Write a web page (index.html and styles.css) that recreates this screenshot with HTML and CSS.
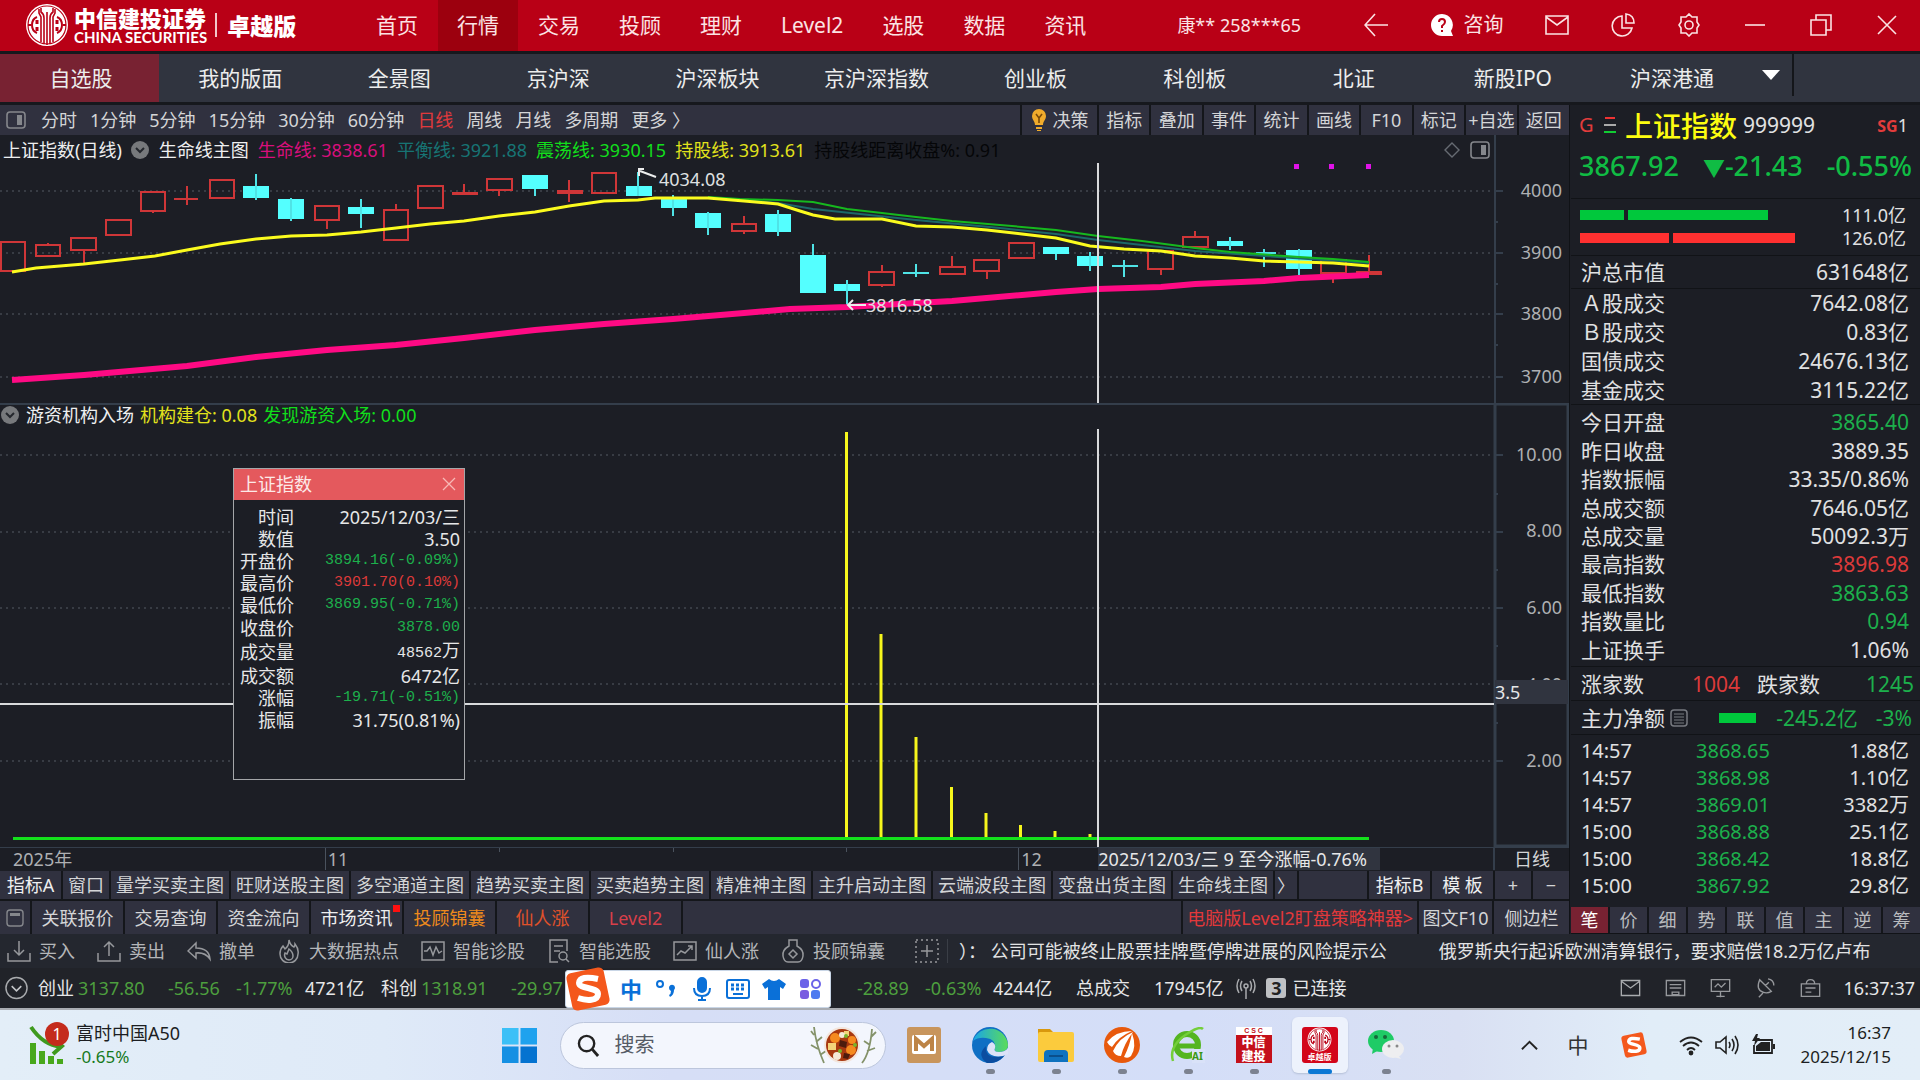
FILE: index.html
```html
<!DOCTYPE html>
<html lang="zh-CN">
<head>
<meta charset="utf-8">
<title>中信建投证券 卓越版</title>
<link rel="stylesheet" href="styles.css">
</head>
<body>
<svg class="defs" aria-hidden="true">
  <symbol id="emblem" viewBox="0 0 44 44">
    <circle cx="22" cy="22" r="21" fill="#fff"/>
    <circle cx="22" cy="22" r="19" fill="none" stroke="#b90016" stroke-width="1.2"/>
    <g fill="none" stroke="#b90016" stroke-width="1.6">
      <path d="M16 5v4q3 2 3 6v26M28 5v4q-3 2-3 6v26M14 6v4l2 4v25M30 6v4l-2 4v25M22 9v33"/>
      <path d="M3 22h3M41 22h-3M12 14q-5 2-5 8t5 8M32 14q5 2 5 8t-5 8" stroke-width="2"/>
      <path d="M12 17v4M12 24v4M32 17v4M32 24v4" stroke-width="3"/>
    </g>
  </symbol>
  <symbol id="mail" viewBox="0 0 24 24"><path d="M1 3h22v18H1zM1 4l11 8 11-8" fill="none" stroke="currentColor" stroke-width="1.6"/></symbol>
  <symbol id="panel" viewBox="0 0 20 18"><rect x="1" y="1" width="18" height="16" rx="3" fill="none" stroke="currentColor" stroke-width="1.6"/><path d="M11 4h5v10h-5z" fill="currentColor"/></symbol>
  <symbol id="chev" viewBox="0 0 20 20"><circle cx="10" cy="10" r="9" fill="#77797c"/><path d="M6 8l4 4 4-4" fill="none" stroke="#24272d" stroke-width="2"/></symbol>
  <symbol id="sogou" viewBox="0 0 48 48"><rect x="5" y="5" width="38" height="38" rx="5" fill="#f4581c" transform="rotate(-12 24 24)"/><path d="M34 14q-18-4-19 4c0 6 19 4 19 11 0 7-11 7-20 4" fill="none" stroke="#fff" stroke-width="6"/></symbol>
</svg>

<header class="topbar">
  <div class="brand">
    <svg class="brand-mark"><use href="#emblem"/></svg>
    <div class="brand-name"><strong>中信建投证券</strong><span>CHINA SECURITIES</span></div>
    <strong class="brand-edition">卓越版</strong>
  </div>
  <nav class="menu">
    <a href="#">首页</a><a href="#" class="on">行情</a><a href="#">交易</a><a href="#">投顾</a><a href="#">理财</a><a href="#">Level2</a><a href="#">选股</a><a href="#">数据</a><a href="#">资讯</a>
  </nav>
  <span class="user">康** 258***65</span>
  <div class="window-tools">
    <button aria-label="返回"><svg viewBox="0 0 24 24"><path d="M24 12H1M11 1L1 12l10 11"/></svg></button>
    <button class="ask"><svg viewBox="0 0 24 24"><path d="M12 1a11 11 0 1 0 0 22h11l-2-5A11 11 0 0 0 12 1z" fill="#fff" stroke="none"/><path d="M9 9q0-3 3-3t3 3q0 2-3 4v2M12 17v2" stroke="#b90016" stroke-width="2"/></svg>咨询</button>
    <button aria-label="邮件"><svg><use href="#mail"/></svg></button>
    <button aria-label="统计"><svg viewBox="0 0 24 24"><path d="M11 3a10 10 0 1 0 10 12H11z M15 1v9h8q0-8-8-9z"/></svg></button>
    <button aria-label="设置"><svg viewBox="0 0 24 24"><path d="M9 4l3-3 3 3 5 0 0 5 2 3-2 3 0 5-5 0-3 3-3-3-5 0 0-5-2-3 2-3 0-5z"/><circle cx="12" cy="12" r="4"/></svg></button>
    <button aria-label="最小化"><svg viewBox="0 0 24 24"><path d="M2 12h20"/></svg></button>
    <button aria-label="还原"><svg viewBox="0 0 24 24"><path d="M2 7h15v15H2zM7 7V2h15v15h-5"/></svg></button>
    <button aria-label="关闭"><svg viewBox="0 0 24 24"><path d="M3 3l18 18M21 3L3 21"/></svg></button>
  </div>
</header>

<nav class="tabs">
  <div class="tabs-list">
    <a href="#" class="on">自选股</a><a href="#">我的版面</a><a href="#">全景图</a><a href="#">京沪深</a><a href="#">沪深板块</a><a href="#">京沪深指数</a><a href="#">创业板</a><a href="#">科创板</a><a href="#">北证</a><a href="#">新股IPO</a><a href="#">沪深港通</a>
  </div>
  <button class="tabs-more" aria-label="更多板块"><svg viewBox="0 0 18 10"><path d="M0 0h18l-9 10z" fill="#fff"/></svg></button>
</nav>

<main class="work">
  <section class="charts">
    <div class="toolbar">
      <div class="periods">
        <svg class="ico-panel"><use href="#panel"/></svg>
        <button>分时</button><button>1分钟</button><button>5分钟</button><button>15分钟</button><button>30分钟</button><button>60分钟</button><button class="on">日线</button><button>周线</button><button>月线</button><button>多周期</button><button>更多 〉</button>
      </div>
      <div class="tools">
        <button class="decide"><svg viewBox="0 0 16 24"><path d="M8 1a7 7 0 0 0-7 7c0 4 3 5 3 9h8c0-4 3-5 3-9a7 7 0 0 0-7-7zM5 19h6v2H5zM6 22h4v1H6z" fill="#f0ab2c"/><path d="M5 6l3 4 3-4M8 10v5" fill="none" stroke="#7a4a08" stroke-width="1.6"/></svg>决策</button><button>指标</button><button>叠加</button><button>事件</button><button>统计</button><button>画线</button><button>F10</button><button>标记</button><button>+自选</button><button>返回</button>
      </div>
    </div>

    <div class="pane pane-price">
      <svg class="plot" viewBox="0 135 1569 268" preserveAspectRatio="none">
        <path class="grid" d="M0 191h1494M0 253h1494M0 314h1494M0 377h1494"/>
        <path class="axis" d="M1495 135v268M1494 191h9M1494 253h9M1494 314h9M1494 377h9M1494 222h4M1494 284h4M1494 345h4"/>
        <path class="up" d="M1 242h24v29H1zM36 245h24v11H36zM48 243v2M71 238h25v12H71zM84 237v1M84 250v13M106 220h25v15h-25zM141 192h24v19h-24zM153 211v2M174 199h24M187 186v19M210 180h24v18h-24zM315 206h24v14h-24zM327 220v9M384 210h24v30h-24zM396 204v6M418 186h25v22h-25zM452 193h26M452 194h26M464 184v9M487 179h25v11h-25zM499 190v6M557 191h26M557 193h26M569 180v22M592 173h24v20h-24zM732 224h24v7h-24zM744 216v8M744 231v3M869 272h25v13h-25zM882 265v7M882 285v2M940 267h25v7h-25zM952 256v11M974 260h25v11h-25zM987 271v8M1009 243h25v15h-25zM1148 251h25v18h-25zM1161 269v6M1183 237h25v10h-25zM1195 231v6M1321 260h25v13h-25zM1333 273v10M1356 272h26M1356 274h26M1369 255v17"/>
        <path class="down" d="M243 186h26v12h-26zM278 199h26v20h-26zM348 207h26v7h-26zM522 175h26v14h-26zM626 186h26v10h-26zM661 199h26v9h-26zM695 213h26v15h-26zM765 214h26v18h-26zM800 255h26v38h-26zM834 284h26v7h-26zM1043 247h26v7h-26zM1077 256h26v10h-26zM1217 241h26v5h-26zM1286 250h26v19h-26z"/>
        <path class="down-wick" d="M256 174v26M291 198v23M361 199v29M535 189v7M638 172v24M673 195v21M708 212v23M778 210v26M813 244v11M847 280v25M903 273h26M916 264v13M1056 254v6M1090 252v19M1112 266h26M1124 260v17M1230 237v13M1256 253h20M1264 249v18M1299 249v26"/>
        <path class="teal" d="M708 198L744 200 778 203 813 209 860 214 916 220 1000 228 1056 234 1098 240 1195 251 1264 256 1369 263"/>
        <path class="green" d="M708 197L740 199 778 200 813 202 847 209 882 213 916 217 952 221 1000 225 1056 230 1098 236 1142 241 1195 248 1230 252 1299 257 1333 259 1369 262"/>
        <path class="pink" d="M12 380L84 375 187 366 256 357 327 350 396 345 464 338 535 330 604 324 673 319 744 313 790 309 847 307 916 303 952 301 1022 295 1056 292 1098 289 1161 287 1195 284 1264 281 1299 278 1369 275"/>
        <path class="yellow" d="M12 272L36 268 60 266 84 264 120 260 155 256 187 250 220 244 256 239 291 236 327 235 361 232 396 228 430 224 464 221 499 216 535 212 569 206 604 201 638 200 655 198 708 198 744 201 778 204 800 211 813 215 835 219 882 219 916 226 952 227 987 230 1022 234 1056 238 1090 246 1124 249 1161 251 1195 256 1230 258 1264 261 1299 262 1333 263 1369 266"/>
        <path d="M1294 164h5v5h-5zM1329 164h5v5h-5zM1366 164h5v5h-5z" fill="#e012e8"/>
        <path class="cross" d="M1098 163v240"/>
        <path class="pointer" d="M639 176v-7h5M640 171l8 3 8 3M866 305h-18M853 300l-5 5 5 5"/>
      </svg>
      <div class="legend">
        <span class="w">上证指数(日线)</span><svg class="ico-chev"><use href="#chev"/></svg><span class="w">生命线主图</span><span class="c-pink">生命线: 3838.61</span><span class="c-teal">平衡线: 3921.88</span><span class="c-green">震荡线: 3930.15</span><span class="c-yellow">持股线: 3913.61</span><span class="c-black">持股线距离收盘%: 0.91</span>
        <span class="legend-end"><svg class="ico-dia" viewBox="0 0 16 16"><path d="M8 1l7 7-7 7-7-7z" fill="none" stroke="#666b72" stroke-width="1.4"/></svg><svg class="ico-panel"><use href="#panel"/></svg></span>
      </div>
      <span class="mark" style="left:42%;top:16.400%">4034.08</span>
      <span class="mark" style="left:55.2%;top:63.400%">3816.58</span>
      <ol class="scale">
        <li style="top:20.5%">4000</li><li style="top:43.500%">3900</li><li style="top:66.400%">3800</li><li style="top:90%">3700</li>
      </ol>
    </div>

    <div class="pane pane-vol">
      <svg class="plot" viewBox="0 403 1569 444" preserveAspectRatio="none">
        <path class="grid" d="M0 455h1494M0 532h1494M0 608h1494M0 684h1494M0 761h1494"/>
        <path class="axis" d="M0 404h1568M1568 403v443"/>
        <path class="axis-box" d="M1495 404h73v442h-73z"/>
        <path class="axis" d="M1494 455h9M1494 532h9M1494 608h9M1494 684h9M1494 761h9M1494 494h4M1494 570h4M1494 646h4M1494 723h4"/>
        <path class="bars" d="M846.500 432v406M881 634v204M916 737v101M951.500 787v51M986 813v25M1020.500 825v13M1055 831v7M1090 834v4"/>
        <path class="base" d="M13 838.500h1356"/>
        <path class="cross" d="M1098 429v418M0 704h1494"/>
      </svg>
      <div class="legend">
        <svg class="ico-chev"><use href="#chev"/></svg><span class="w">游资机构入场</span><span class="c-yellow">机构建仓: 0.08</span><span class="c-green">发现游资入场: 0.00</span>
      </div>
      <ol class="scale">
        <li style="top:11.500%">10.00</li><li style="top:28.600%">8.00</li><li style="top:46%">6.00</li><li style="top:63.200%">4.00</li><li style="top:80.400%">2.00</li>
      </ol>
      <output class="cursor-value" style="top:62.400%">3.5</output>

      <section class="tip">
        <header><h2>上证指数</h2><button aria-label="关闭"><svg viewBox="0 0 14 14"><path d="M1 1l12 12M13 1L1 13" fill="none" stroke="#f7b9b6" stroke-width="1.3"/></svg></button></header>
        <table>
          <tr><th>时间</th><td>2025/12/03/三</td></tr>
          <tr><th>数值</th><td>3.50</td></tr>
          <tr><th>开盘价</th><td class="mono dn">3894.16(-0.09%)</td></tr>
          <tr><th>最高价</th><td class="mono rd">3901.70(0.10%)</td></tr>
          <tr><th>最低价</th><td class="mono dn">3869.95(-0.71%)</td></tr>
          <tr><th>收盘价</th><td class="mono dn">3878.00</td></tr>
          <tr><th>成交量</th><td class="mono">48562<span class="unit">万</span></td></tr>
          <tr><th>成交额</th><td>6472亿</td></tr>
          <tr><th>涨幅</th><td class="mono dn">-19.71(-0.51%)</td></tr>
          <tr><th>振幅</th><td>31.75(0.81%)</td></tr>
        </table>
      </section>
    </div>

    <div class="dates">
      <span class="first">2025年</span>
      <span class="month" style="left:20.700%">11</span>
      <i style="left:31.800%"></i><i style="left:42.900%"></i><i style="left:53.900%"></i>
      <span class="month" style="left:64.900%">12</span>
      <output style="left:70%">2025/12/03/三 9 至今涨幅-0.76%</output>
      <span class="unit-label">日线</span>
    </div>

    <div class="strip strip-formula">
      <button class="w set">指标A</button><button>窗口</button><button>量学买卖主图</button><button>旺财送股主图</button><button>多空通道主图</button><button>趋势买卖主图</button><button>买卖趋势主图</button><button>精准神主图</button><button>主升启动主图</button><button>云端波段主图</button><button>变盘出货主图</button><button>生命线主图</button><button class="next">〉</button><span class="fill"></span><button class="w set">指标B</button><button class="w set">模 板</button><button class="sign">+</button><button class="sign">−</button>
    </div>
    <div class="strip strip-info">
      <button class="small" aria-label="面板"><svg viewBox="0 0 18 18"><rect x="1" y="1" width="16" height="16" rx="3" fill="none" stroke="#85878c" stroke-width="1.4"/><path d="M4 4h10v3H4z" fill="#85878c"/></svg></button><button>关联报价</button><button>交易查询</button><button>资金流向</button><button class="w dot">市场资讯</button><button class="c-orange">投顾锦囊</button><button class="c-flame">仙人涨</button><button class="c-red">Level2</button><span class="fill"></span><a href="#" class="promo">电脑版Level2盯盘策略神器&gt;</a><button class="f10">图文F10</button><button class="side">侧边栏</button>
    </div>
  </section>

  <aside class="quote">
    <div class="quote-head">
      <div class="quote-title"><b>G</b><svg viewBox="0 0 12 18"><path d="M1 2h10" stroke="#e33"/><path d="M0 9h12" stroke="#aaa"/><path d="M0 16h12" stroke="#1c3"/></svg><h1>上证指数</h1><span>999999</span><em><b>SG</b>1</em></div>
      <div class="quote-price"><span>3867.92</span><span><small>▼</small>-21.43</span><span>-0.55%</span></div>
    </div>
    <div class="flows">
      <div><i class="g" style="width:44px"></i><i class="g" style="width:140px"></i><span>111.0亿</span></div>
      <div><i class="r" style="width:89px"></i><i class="r" style="width:122px"></i><span>126.0亿</span></div>
    </div>
    <table class="kv"><tr><th>沪总市值</th><td>631648亿</td></tr></table>
    <table class="kv amounts">
      <tr><th>Ａ股成交</th><td>7642.08亿</td></tr>
      <tr><th>Ｂ股成交</th><td>0.83亿</td></tr>
      <tr><th>国债成交</th><td>24676.13亿</td></tr>
      <tr><th>基金成交</th><td>3115.22亿</td></tr>
    </table>
    <div class="day">
      <table class="kv">
        <tr><th>今日开盘</th><td class="dn">3865.40</td></tr>
        <tr><th>昨日收盘</th><td>3889.35</td></tr>
        <tr><th>指数振幅</th><td>33.35/0.86%</td></tr>
        <tr><th>总成交额</th><td>7646.05亿</td></tr>
        <tr><th>总成交量</th><td>50092.3万</td></tr>
        <tr><th>最高指数</th><td class="rd">3896.98</td></tr>
        <tr><th>最低指数</th><td class="dn">3863.63</td></tr>
        <tr><th>指数量比</th><td class="dn">0.94</td></tr>
        <tr><th>上证换手</th><td>1.06%</td></tr>
      </table>
    </div>
    <div class="line breadth"><span>涨家数</span><span class="rd">1004</span><span>跌家数</span><span class="dn">1245</span></div>
    <div class="line netflow"><span>主力净额</span><svg viewBox="0 0 18 18"><rect x="1" y="1" width="16" height="16" rx="3" fill="none" stroke="#777a80" stroke-width="1.5"/><path d="M4 5h10M4 8h10M4 11h10M4 14h10" stroke="#777a80" stroke-width="1.2"/></svg><i></i><span class="dn">-245.2亿</span><span class="dn">-3%</span></div>
    <table class="ticks">
      <tr><td>14:57</td><td class="dn">3868.65</td><td>1.88亿</td></tr>
      <tr><td>14:57</td><td class="dn">3868.98</td><td>1.10亿</td></tr>
      <tr><td>14:57</td><td class="dn">3869.01</td><td>3382万</td></tr>
      <tr><td>15:00</td><td class="dn">3868.88</td><td>25.1亿</td></tr>
      <tr><td>15:00</td><td class="dn">3868.42</td><td>18.8亿</td></tr>
      <tr><td>15:00</td><td class="dn">3867.92</td><td>29.8亿</td></tr>
    </table>
    <div class="quote-tabs"><button class="on">笔</button><button>价</button><button>细</button><button>势</button><button>联</button><button>值</button><button>主</button><button>逆</button><button>筹</button></div>
  </aside>
</main>

<div class="actions">
  <button><svg viewBox="0 0 24 24"><path d="M1 14v8h22v-8M12 2v14M7 11l5 5 5-5"/></svg>买入</button>
  <button><svg viewBox="0 0 24 24"><path d="M1 14v8h22v-8M12 17V3M7 8l5-5 5 5"/></svg>卖出</button>
  <button><svg viewBox="0 0 24 24"><path d="M9 4l-8 8 8 7v-5q9-1 14 6-1-11-14-11z"/></svg>撤单</button>
  <button><svg viewBox="0 0 24 24"><path d="M12 1q1 5 5 7 1-1 1-3 4 5 3 10a9 9 0 0 1-18 0Q3 10 6 7l2 3q4-3 4-9zM12 21a5 5 0 0 1-4-7l2 1 2-5q4 3 4 7a4 4 0 0 1-4 4z"/></svg>大数据热点</button>
  <button><svg viewBox="0 0 24 24"><path d="M1 3h22v18H1zM3 12h3l3-4 3 8 3-8 3 6 3-2"/></svg>智能诊股</button>
  <button><svg viewBox="0 0 24 24"><path d="M11 23H3V1h17v11M7 7h9M7 12h6"/><circle cx="16" cy="17" r="4"/><path d="M19 20l3 3"/></svg>智能选股</button>
  <button><svg viewBox="0 0 24 24"><path d="M1 3h22v18H1zM4 16l4-4 4 2 7-7M15 7h4v4"/></svg>仙人涨</button>
  <button><svg viewBox="0 0 24 24"><path d="M8 1h8v6q7 4 6 10-1 6-5 6H7q-4 0-5-6-1-6 6-10z"/><path d="M12 11l4 4-4 4-4-4z"/></svg>投顾锦囊</button>
  <button class="add" aria-label="添加"><svg viewBox="0 0 24 24"><path d="M1 1h22v22H1z" stroke-dasharray="2 3"/><path d="M12 6v12M6 12h12"/></svg></button>
  <p class="news"><span>）： 公司可能被终止股票挂牌暨停牌进展的风险提示公</span><span>俄罗斯央行起诉欧洲清算银行，要求赔偿18.2万亿卢布</span></p>
</div>

<div class="status">
  <svg class="ico-round" viewBox="0 0 24 24"><circle cx="12" cy="12" r="11" fill="none" stroke="#a9abae" stroke-width="1.5"/><path d="M7 10l5 5 5-5" fill="none" stroke="#c3c5c8" stroke-width="1.6"/></svg>
  <div class="idx"><span>创业</span><span class="gr">3137.80</span><span class="gr">-56.56</span><span class="gr">-1.77%</span><span>4721亿</span></div>
  <div class="idx"><span>科创</span><span class="gr">1318.91</span><span class="gr">-29.97</span></div>
  <div class="ime">
    <svg class="ime-logo"><use href="#sogou"/></svg><b>中</b>
    <svg viewBox="0 0 24 24"><circle cx="6" cy="7" r="3" fill="none" stroke="#0a70d8" stroke-width="2"/><path d="M15 11a3 3 0 1 1 5 2q0 5-4 7l-1-2q2-1 2-4-2-1-2-3z" fill="#0a70d8"/></svg>
    <svg viewBox="0 0 24 24" fill="none" stroke="#0a70d8" stroke-width="2"><rect x="8" y="1" width="8" height="14" rx="4" fill="#0a70d8"/><path d="M4 11q0 8 8 8t8-8M12 19v4M8 23h8"/></svg>
    <svg viewBox="0 0 24 24" fill="none" stroke="#0a70d8" stroke-width="2"><rect x="1" y="3" width="22" height="18" rx="2"/><path d="M5 8h14M5 12h14" stroke-width="3" stroke-dasharray="3 2"/><path d="M7 17h10"/></svg>
    <svg viewBox="0 0 24 24"><path d="M7 2q5 4 10 0l7 5-3 5-3-2v13H6V10l-3 2-3-5z" fill="#0a70d8"/></svg>
    <svg viewBox="0 0 24 24"><rect x="2" y="2" width="9" height="9" rx="3" fill="#6b63e8"/><rect x="14" y="3" width="8" height="8" rx="4" fill="none" stroke="#6b63e8" stroke-width="2"/><rect x="2" y="13" width="9" height="9" rx="3" fill="#7a5be0"/><rect x="13" y="13" width="9" height="9" rx="3" fill="#4e7bf0"/></svg>
  </div>
  <div class="idx idx-tail"><span class="gr">-28.89</span><span class="gr">-0.63%</span><span>4244亿</span></div>
  <span class="total">总成交</span><span>17945亿</span>
  <svg class="ico-ant" viewBox="0 0 20 22" fill="none" stroke="#a9abae" stroke-width="1.5"><circle cx="10" cy="9" r="2"/><path d="M10 11v11M6 4q-3 5 0 10M14 4q3 5 0 10M3 2q-4 7 0 14M17 2q4 7 0 14"/></svg>
  <b class="count">3</b><span>已连接</span>
  <div class="status-end">
    <svg><use href="#mail"/></svg>
    <svg viewBox="0 0 24 24"><path d="M1 3h22v18H1zM5 8h14M5 12h14M8 17h8v3H8z"/></svg>
    <svg viewBox="0 0 24 24"><path d="M1 2h22v14H1zM12 16v7M7 22h10M5 11l4-4 4 4 5-5"/></svg>
    <svg viewBox="0 0 24 24"><path d="M5 2q-5 12 4 15 5 2 10-1zM12 9l4-4M9 18l-5 5M15 1q7 1 7 8"/></svg>
    <svg viewBox="0 0 24 24"><path d="M1 7h22v15H1zM7 7q0-5 5-5t5 5M6 12h12M6 17h7"/></svg>
    <time>16:37:37</time>
  </div>
</div>

<footer class="taskbar">
  <button class="widget">
    <span class="widget-ico"><svg viewBox="0 0 36 40"><path d="M2 2q12 18 30 20M24 29l9-8-7-6" fill="none" stroke="#3f9a1e" stroke-width="4"/><path d="M1 18h6v21H1zM10 26h6v13h-6zM19 31h6v8h-6zM28 34h6v5h-6z" fill="#48a81c"/></svg><b>1</b></span>
    <span class="widget-text">富时中国A50<em>-0.65%</em></span>
  </button>
  <div class="dock">
    <button class="start" aria-label="开始"><svg viewBox="0 0 36 36"><path d="M0 0h17v17H0z" fill="#3cc0f7"/><path d="M19 0h17v17H19z" fill="#1fa2ee"/><path d="M0 19h17v17H0z" fill="#1590e3"/><path d="M19 19h17v17H19z" fill="#0573d0"/></svg></button>
    <label class="search"><svg viewBox="0 0 24 24"><circle cx="10" cy="10" r="8" fill="none" stroke="#222" stroke-width="2.500"/><path d="M16 16l6 7" stroke="#222" stroke-width="3"/></svg><input type="text" placeholder="搜索" aria-label="搜索">
      <svg class="food" viewBox="0 0 68 40"><path d="M14 38Q6 20 4 2M4 10l-3-4M6 17l6-5M8 24l-7-4M10 30l6-4M52 38q8-10 10-34M61 12l5-5M60 20l-6-4M57 26l8-3" fill="none" stroke="#84926a" stroke-width="1.800"/><circle cx="32" cy="20" r="18" fill="#f3e6dd"/><circle cx="32" cy="20" r="16" fill="#a8380f"/><g fill="#f58a1f"><circle cx="25" cy="13" r="5"/><circle cx="41" cy="25" r="5"/><circle cx="42" cy="15" r="4"/></g><g fill="#f3d37a"><path d="M18 18h8v7h-8zM34 6h5v5h-5z"/></g><g fill="#f6e9d6"><circle cx="27" cy="31" r="4"/><circle cx="32" cy="10" r="3"/></g><g fill="#4d1b0d"><path d="M30 15l7 2-1 6-7-2zM34 28l6 1-2 5-5-1z"/></g><g fill="#7ab52c"><circle cx="36" cy="11" r="2"/><circle cx="30" cy="26" r="2"/><circle cx="45" cy="20" r="2"/></g></svg>
    </label>
    <button class="app" aria-label="M"><svg viewBox="0 0 36 36"><rect x="1" width="34" height="36" rx="3" fill="#c8955c"/><rect x="6" y="8" width="24" height="19" rx="2" fill="#fff"/><path d="M10 24V12l8 7 8-7v12" fill="none" stroke="#bd8446" stroke-width="4"/></svg></button>
    <button class="app run" aria-label="Edge"><svg viewBox="0 0 36 36"><defs><linearGradient id="eg"><stop offset="0" stop-color="#19a5e8"/><stop offset="1" stop-color="#5bdc5a"/></linearGradient></defs><circle cx="18" cy="18" r="18" fill="#0f6fc4"/><path d="M1 14A18 18 0 0 1 36 18q0 7-9 7-6 0-4-4 1-9-9-10-8-1-13 3z" fill="url(#eg)"/><path d="M14 19q-2 14 18 10-7 8-17 7Q4 28 14 19z" fill="#0b4da0"/><path d="M23 21q-2 4 4 4 6 0 9-4v6l-5 2q-13 2-16-6 0-6 5-8 4 2 3 6z" fill="#dbe2f8"/></svg></button>
    <button class="app run" aria-label="资源管理器"><svg viewBox="0 0 36 36"><path d="M0 2h12l4 4v5H0z" fill="#d9980d"/><rect y="5" width="36" height="30" rx="2" fill="#fbcb3d"/><path d="M6 35v-8q0-4 4-4h16q4 0 4 4v8z" fill="#0f72bf"/><path d="M11 29h14" stroke="#0a4f8c" stroke-width="2"/></svg></button>
    <button class="app run" aria-label="东方财富"><svg viewBox="0 0 36 36"><circle cx="18" cy="18" r="18" fill="#e8590c"/><path d="M3 15Q12 4 28 4 14 10 8 20 5 19 3 15zM9 24Q15 11 29 5 20 17 17 29 11 29 9 24zM20 30q6-12 8-24 5 14-1 23-3 3-7 1z" fill="#fff"/></svg></button>
    <button class="app run" aria-label="浏览器"><svg viewBox="0 0 36 36" fill="none"><circle cx="17" cy="18" r="11" stroke="#54b521" stroke-width="6"/><path d="M8 19h20" stroke="#54b521" stroke-width="5"/><path d="M22 36V22h13v14z" fill="#d9e2f8"/><path d="M3 34Q-2 18 20 5q10-6 13-3" stroke="#74cf3a" stroke-width="2.500"/><text x="22" y="33" font-size="10" font-weight="700" fill="#3b9614">AI</text></svg></button>
    <button class="app run" aria-label="中信建投"><span class="csc"><small>C S C</small><b>中信</b><b>建投</b></span></button>
    <button class="app run active" aria-label="卓越版"><span class="csc edition"><svg><use href="#emblem"/></svg><small>卓越版</small></span></button>
    <button class="app run" aria-label="微信"><svg viewBox="0 0 36 36"><ellipse cx="13" cy="14" rx="13" ry="11" fill="#1fcb66"/><path d="M5 21l-1 6 7-4z" fill="#1fcb66"/><ellipse cx="25" cy="22" rx="11" ry="9" fill="#eeeef0"/><path d="M30 28l3 4-7-2z" fill="#eeeef0"/><g fill="#17683a"><circle cx="8" cy="10" r="2"/><circle cx="17" cy="10" r="2"/></g><g fill="#888"><circle cx="21" cy="19" r="1.500"/><circle cx="29" cy="19" r="1.500"/></g></svg></button>
  </div>
  <div class="tray">
    <svg class="t-up" viewBox="0 0 18 18"><path d="M1 13l8-8 8 8" fill="none" stroke="#222" stroke-width="2"/></svg>
    <span class="t-cn">中</span>
    <svg class="t-s"><use href="#sogou"/></svg>
    <svg class="t-net" viewBox="0 0 24 24" fill="none" stroke="#222" stroke-width="1.800"><path d="M1 9q11-9 22 0M4 13q8-7 16 0M8 17q4-4 8 0"/><circle cx="12" cy="20" r="1.500" fill="#222"/></svg>
    <svg class="t-vol" viewBox="0 0 24 24" fill="none" stroke="#222" stroke-width="1.600"><path d="M1 9h4l6-5v16l-6-5H1zM14 9q2 3 0 6M17 6q4 6 0 12M20 3q6 9 0 18"/></svg>
    <svg class="t-bat" viewBox="0 0 24 24"><path d="M7 7h14v13H3v-8" fill="none" stroke="#222" stroke-width="1.800"/><path d="M10 9h9v9H5v-5zM22 11h2v5h-2zM5 1L1 8h3l-1 5 6-8H6l1-4z" fill="#222"/></svg>
    <time>16:37<br>2025/12/15</time>
  </div>
</footer>
</body>
</html>
```
FILE: styles.css
```css
* { box-sizing: border-box; }
body {
  margin: 0;
  min-height: 100vh;
  display: flex;
  flex-direction: column;
  background: #14161a;
  color: #d4d5d7;
  font: 18px/24px "Noto Sans", "Noto Sans CJK SC", sans-serif;
  white-space: nowrap;
  overflow-x: hidden;
}
button, input { font: inherit; color: inherit; background: none; border: 0; padding: 0; margin: 0; }
button { display: flex; align-items: center; justify-content: center; white-space: nowrap; }
a { color: inherit; text-decoration: none; }
svg { display: block; flex: none; }
.defs { position: absolute; width: 0; height: 0; }
i, em { font-style: normal; }
h1, h2, ol, p { margin: 0; padding: 0; font-weight: 400; list-style: none; }
table { border-collapse: collapse; }
th, td { padding: 0; font-weight: 400; }

.w { color: #eeeff0; }
.dn { color: #1cb04c; }
.rd { color: #dc3a3a; }
.gr { color: #4d9f3e; }
.c-pink { color: #d80f7c; }
.c-teal { color: #177474; }
.c-green { color: #12de1c; }
.c-yellow { color: #e2e21c; }
.c-black { color: #050608; }
.c-orange { color: #ee8a1c; }
.c-flame { color: #e0512a; }
.c-red { color: #d83f4a; }

/* title bar */
.topbar { display: flex; align-items: center; height: 54px; padding: 0 0 2px 25px; background: #b90016; border-bottom: 3px solid #16181d; color: #fbe3e4; font-size: 21px; }
.brand { display: flex; align-items: center; width: 332px; color: #fff; }
.brand-mark { width: 44px; height: 44px; margin-right: 5px; }
.brand-name { display: flex; flex-direction: column; font: 900 22px/25px "Noto Sans CJK SC", sans-serif; }
.brand-name span { font: 700 15px/15px Lato, sans-serif; }
.brand-edition { margin-left: 8px; padding-left: 10px; border-left: 2px solid #f3c6c9; font: 900 23px/24px "Noto Sans CJK SC", sans-serif; }
.menu { display: flex; gap: 1px; align-self: stretch; margin-bottom: -2px; }
.menu a { display: flex; align-items: center; padding: 0 19px 2px; }
.menu .on { background: #9c000e; }
.user { margin-left: 72px; font-size: 18px; }
.window-tools { display: flex; margin-left: auto; align-self: stretch; }
.window-tools button { width: 66px; }
.window-tools .ask { width: 115px; gap: 10px; font-size: 20px; }
.window-tools svg { width: 24px; height: 24px; fill: none; stroke: currentColor; stroke-width: 1.6; }

/* market tabs */
.tabs { display: flex; height: 51px; background: #30343f; border-bottom: 3px solid #16181d; font-size: 21px; color: #eceded; }
.tabs-list { display: flex; flex: 0 1 1750px; }
.tabs-list a { flex: 1; display: flex; align-items: center; justify-content: center; padding-left: 3px; }
.tabs-list .on { background: #782232; }
.tabs-more { width: 44px; height: 42px; border-right: 2px solid #14161a; }
.tabs-more svg { width: 18px; height: 10px; }

.work { flex: 1; display: grid; grid-template-columns: minmax(0, 1fr) 350px; }
.charts { display: flex; flex-direction: column; min-width: 0; border-right: 1px solid #101216; }

/* chart toolbar */
.toolbar { display: flex; height: 30px; background: #14161a; }
.periods { flex: 1; display: flex; align-items: center; gap: 13px; padding-left: 6px; background: #30313f; }
.periods .ico-panel { margin-right: 2px; }
.periods .on { color: #e0393c; }
.ico-panel { width: 20px; height: 18px; color: #85878c; }
.tools { display: flex; gap: 2px; width: 549px; padding-left: 2px; }
.tools button { flex: 1; background: #30313f; }
.tools .decide { flex: 0 0 75px; gap: 6px; }
.decide svg { width: 16px; height: 24px; }

/* chart panes */
.pane { position: relative; background: #1c1e25; }
.pane-price { height: 268px; }
.pane-vol { flex: 1 0 444px; }
.plot { position: absolute; inset: 0; width: 100%; height: 100%; }
.plot path { vector-effect: non-scaling-stroke; }
.grid { stroke: #383c44; stroke-width: 2; stroke-dasharray: 2 4; fill: none; }
.axis { stroke: #343e4b; stroke-width: 2; fill: none; }
.axis-box { stroke: #343e4b; stroke-width: 3; fill: #1c1e25; }
.up { stroke: #cf3638; stroke-width: 2; fill: none; }
.down { fill: #54ffff; }
.down-wick { stroke: #4fe3e6; stroke-width: 2; }
.teal, .green, .pink, .yellow { fill: none; }
.teal { stroke: #1c6868; stroke-width: 2; }
.green { stroke: #16b81e; stroke-width: 2; }
.pink { stroke: #ff0a84; stroke-width: 6; }
.yellow { stroke: #fbfb1e; stroke-width: 3; }
.cross { stroke: #d9dadc; stroke-width: 2; }
.pointer { stroke: #eceded; stroke-width: 2; fill: none; }
.bars { stroke: #f6f61c; stroke-width: 3; }
.base { stroke: #14e01c; stroke-width: 3; }
.legend { position: relative; display: flex; align-items: center; gap: 9px; padding: 3px 79px 0 3px; }
.pane-vol .legend { padding: 0 0 0 1px; gap: 6px; }
.ico-chev { width: 20px; height: 20px; }
.legend .ico-chev { margin-left: -1px; }
.legend-end { display: flex; align-items: center; gap: 10px; margin-left: auto; }
.ico-dia { width: 16px; height: 16px; }
.mark { position: absolute; transform: translateY(-50%); color: #dfe0e1; }
.scale li { position: absolute; right: 7px; transform: translateY(-50%); color: #aeb0b3; }
.cursor-value { position: absolute; right: 1px; width: 73px; height: 24px; background: #30343f; color: #e6e7e8; }

/* crosshair data window */
.tip { position: absolute; left: 233px; top: 65px; width: 232px; height: 312px; background: #1c1e25; border: 1px solid #a4a6a9; color: #e6e7e8; }
.tip header { display: flex; align-items: center; justify-content: space-between; height: 31px; padding: 0 8px 2px 6px; background: #e4595d; color: #fde9e8; }
.tip h2 { font-size: 18px; line-height: 24px; }
.tip button svg { width: 14px; height: 14px; }
.tip table { width: 100%; height: 225px; margin-top: 6px; }
.tip th { width: 60px; text-align: right; line-height: 22px; }
.tip td { padding-right: 4px; text-align: right; line-height: 22px; }
.tip .mono { font-family: "Liberation Mono", monospace; font-size: 15px; }
.tip .unit { font-family: "Noto Sans CJK SC", sans-serif; font-size: 18px; line-height: 20px; }

/* date axis */
.dates { position: relative; height: 24px; background: #1c1e25; color: #aeb0b3; border-top: 1px solid #343e4b; }
.dates > * { position: absolute; top: 0; line-height: 22px; }
.dates .first { left: 13px; }
.month { padding-left: 2px; border-left: 1px solid #4a525d; }
.dates i { width: 1px; height: 4px; background: #4a525d; }
.dates output { width: 282px; background: #30343f; color: #e6e7e8; }
.dates .unit-label { right: 0; width: 76px; border-left: 2px solid #343e4b; text-align: center; color: #d4d5d7; }

/* button strips under the charts */
.strip { display: flex; gap: 2px; }
.strip > * { background: #30313f; }
.strip .fill { flex: 1; }
.strip-formula { height: 28px; margin-bottom: 2px; }
.strip-formula button { padding: 0 5px; }
.strip-formula .next { width: 22px; padding: 0; }
.strip-formula .set { width: 61px; padding: 0; }
.strip-formula .sign { width: 36px; padding: 0; }
.strip-info { height: 33px; }
.strip-info button { width: 91px; }
.strip-info .small { width: 30px; }
.small svg { width: 18px; height: 18px; }
.dot { position: relative; }
.dot::after { content: ""; position: absolute; right: 2px; top: 4px; width: 7px; height: 7px; background: #ff1010; }
.promo { display: flex; align-items: center; padding: 0 4px; color: #e2383a; }
.strip-info .f10 { width: 73px; }
.strip-info .side { width: 75px; }

/* quote panel */
.quote { display: flex; flex-direction: column; padding-left: 1px; background: #1c1e25; font-size: 21px; color: #e0e1e2; }
.quote > * { border-bottom: 1px solid #111317; }
.quote-head { height: 94px; padding: 1px 8px 0; }
.quote-title { display: flex; align-items: center; height: 38px; }
.quote-title > b { color: #e23c3c; font-weight: 400; font-size: 20px; width: 25px; }
.quote-title svg { width: 12px; height: 18px; stroke-width: 2; margin-right: 9px; }
.quote-title h1 { font: 500 28px/36px "Noto Sans CJK SC", sans-serif; color: #fdfd10; margin-right: 6px; }
.quote-title em { margin-left: auto; padding-right: 4px; font-size: 18px; }
.quote-title em b { color: #e23c3c; font-size: 16px; }
.quote-price { display: flex; justify-content: space-between; line-height: 44px; font-size: 27px; font-weight: 500; color: #10bc44; }
.quote-price small { font-size: 22px; }
.flows { padding: 4px 14px 6px 9px; font-size: 18px; }
.flows div { display: flex; align-items: center; gap: 4px; height: 23px; }
.flows i { height: 10px; }
.flows .g { background: #00c83c; }
.flows .r { background: #ff3030; }
.flows span { margin-left: auto; }
.kv { width: 100%; line-height: 28px; }
.kv th { padding-left: 10px; text-align: left; }
.kv td { padding-right: 11px; text-align: right; }
.kv tr { height: 32px; }
.amounts tr { height: 29px; }
.day { flex: 1; padding-top: 3px; }
.day table { height: 256px; }
.day tr { height: 28px; }
.line { display: flex; align-items: center; height: 34px; padding: 0 6px 0 10px; }
.breadth span:nth-child(2) { margin-left: 48px; }
.breadth span:nth-child(3) { margin-left: 17px; }
.breadth span:nth-child(4) { margin-left: auto; }
.netflow svg { width: 18px; height: 18px; margin-left: 5px; }
.netflow i { width: 37px; height: 10px; margin-left: 31px; background: #00c83c; }
.netflow span:nth-child(4) { margin-left: auto; }
.netflow span:last-child { margin-left: 18px; }
.netflow { padding-right: 8px; }
.ticks { width: 100%; margin-top: 2px; }
.quote .ticks { border: 0; }
.ticks tr { height: 27px; }
.ticks td { line-height: 27px; font-size: 20px; text-align: right; }
.ticks td:first-child { width: 61px; }
.ticks td:nth-child(2) { width: 138px; }
.ticks td:last-child { padding-right: 11px; }
.quote-tabs { display: flex; gap: 2px; height: 27px; margin-top: 8px; background: #14161a; }
.quote-tabs button { flex: 1; background: #30313f; font-size: 18px; color: #b9bbbe; }
.quote-tabs .on { background: #782232; color: #fff; }

/* quick actions */
.actions { display: flex; align-items: center; gap: 22px; height: 34px; padding-left: 7px; background: #24272f; color: #b4b6b9; overflow: hidden; }
.actions button { gap: 8px; }
.actions .add { margin-left: 8px; }
.actions svg { width: 24px; height: 24px; fill: none; stroke: #96989c; stroke-width: 1.5; }
.news { display: flex; gap: 52px; margin-left: -14px; padding-left: 11px; border-left: 1px solid #3a3e46; color: #e2e3e4; }

/* index status line */
.status { position: relative; display: flex; align-items: center; height: 42px; padding: 0 5px; background: #212329; border-bottom: 2px solid #a9acb2; color: #e6e7e8; }
.ico-round { width: 23px; height: 24px; }
.idx { display: flex; width: 343px; padding-left: 10px; }
.idx span { margin-right: 4px; }
.idx span:nth-child(2) { width: 86px; }
.idx span:nth-child(3) { width: 64px; }
.idx span:nth-child(4) { width: 65px; }
.idx-tail { width: 219px; margin-left: 143px; padding: 0; }
.idx-tail span:nth-child(n) { width: 64px; }
.total { margin-right: 24px; }
.ico-ant { width: 20px; height: 22px; margin: 0 10px 0 13px; }
.count { width: 20px; margin-right: 6px; border-radius: 3px; background: #bfc1c4; color: #222; line-height: 20px; text-align: center; }
.status-end { display: flex; align-items: center; gap: 22px; margin-left: auto; }
.status-end svg { width: 23px; height: 20px; fill: none; stroke: #96989c; color: #a9abae; stroke-width: 1.6; }
.ime { position: absolute; left: 565px; top: 2px; height: 38px; width: 266px; display: flex; align-items: center; gap: 12px; background: #fff; border: 1px solid #c9d6e6; border-radius: 3px; color: #0a70d8; }
.ime svg { width: 24px; height: 24px; }
.ime b { font-size: 22px; }
.ime svg.ime-logo { width: 48px; height: 48px; margin: 0 -4px 0 -2px; }

/* system taskbar */
.taskbar { display: grid; grid-template-columns: 1fr auto 1fr; align-items: center; height: 70px; background: linear-gradient(90deg, #e3eef8 0%, #dfeaf8 20%, #d6def6 35%, #d4def8 62%, #d9e0f3 76%, #e1edf8 86%, #e3eef8 100%); color: #1c1e22; }
.widget { justify-self: start; padding-left: 29px; gap: 11px; text-align: left; }
.widget-ico { position: relative; width: 36px; height: 42px; }
.widget-ico svg { width: 36px; height: 42px; }
.widget-ico b { position: absolute; left: 16px; top: -2px; width: 24px; border-radius: 12px; background: #c42b1c; color: #fff; font-size: 16px; font-weight: 400; text-align: center; }
.widget-text em { display: block; color: #177a1d; font-size: 17px; }
.dock { display: flex; align-items: center; }
.start svg { width: 35px; height: 35px; }
.search { display: flex; align-items: center; width: 326px; height: 47px; margin: 0 5px 0 23px; padding: 0 7px 0 16px; border: 1px solid #bcc6dc; border-radius: 24px; background: #f3f6fd; }
.search svg { width: 23px; height: 23px; }
.search input { flex: 1; min-width: 0; padding-left: 15px; font-size: 20px; outline: 0; }
.search input::placeholder { color: #555b66; opacity: 1; }
.search svg.food { width: 68px; height: 40px; }
.app { position: relative; width: 66px; height: 56px; }
.app > svg { width: 36px; height: 36px; }
.run::after { content: ""; position: absolute; bottom: -1px; left: 29px; width: 9px; height: 5px; border-radius: 3px; background: #7c8290; }
.active { margin: 0 5px; width: 56px; border-radius: 6px; background: #edf2fc; box-shadow: 0 1px 2px #b4bfd6; }
.active::after { left: 16px; width: 24px; background: #0b78d4; }
.csc { display: grid; grid-template-rows: 8px 14px 14px; width: 36px; height: 36px; background: #c4101a; color: #fff; font: 700 12px/14px "Noto Sans CJK SC", sans-serif; text-align: center; }
.csc small { background: #fff; color: #c4101a; font: 700 7px/8px "Liberation Sans", sans-serif; }
.edition { grid-template-rows: 25px 11px; justify-items: center; border-radius: 3px; background: #d3061a; }
.edition svg { width: 25px; height: 25px; }
.edition small { background: none; color: #fff; font: 700 8px/10px "Noto Sans CJK SC", sans-serif; }
.tray { display: flex; align-items: center; justify-self: end; padding-right: 29px; font-size: 17px; text-align: right; }
.t-up { width: 17px; height: 17px; margin-right: 30px; }
.t-cn { margin-right: 31px; font-size: 21px; color: #333; }
.t-s { width: 28px; height: 28px; margin-right: 31px; }
.t-net, .t-vol, .t-bat { width: 24px; height: 24px; margin-right: 12px; }
.t-bat { margin-right: 26px; }
```
